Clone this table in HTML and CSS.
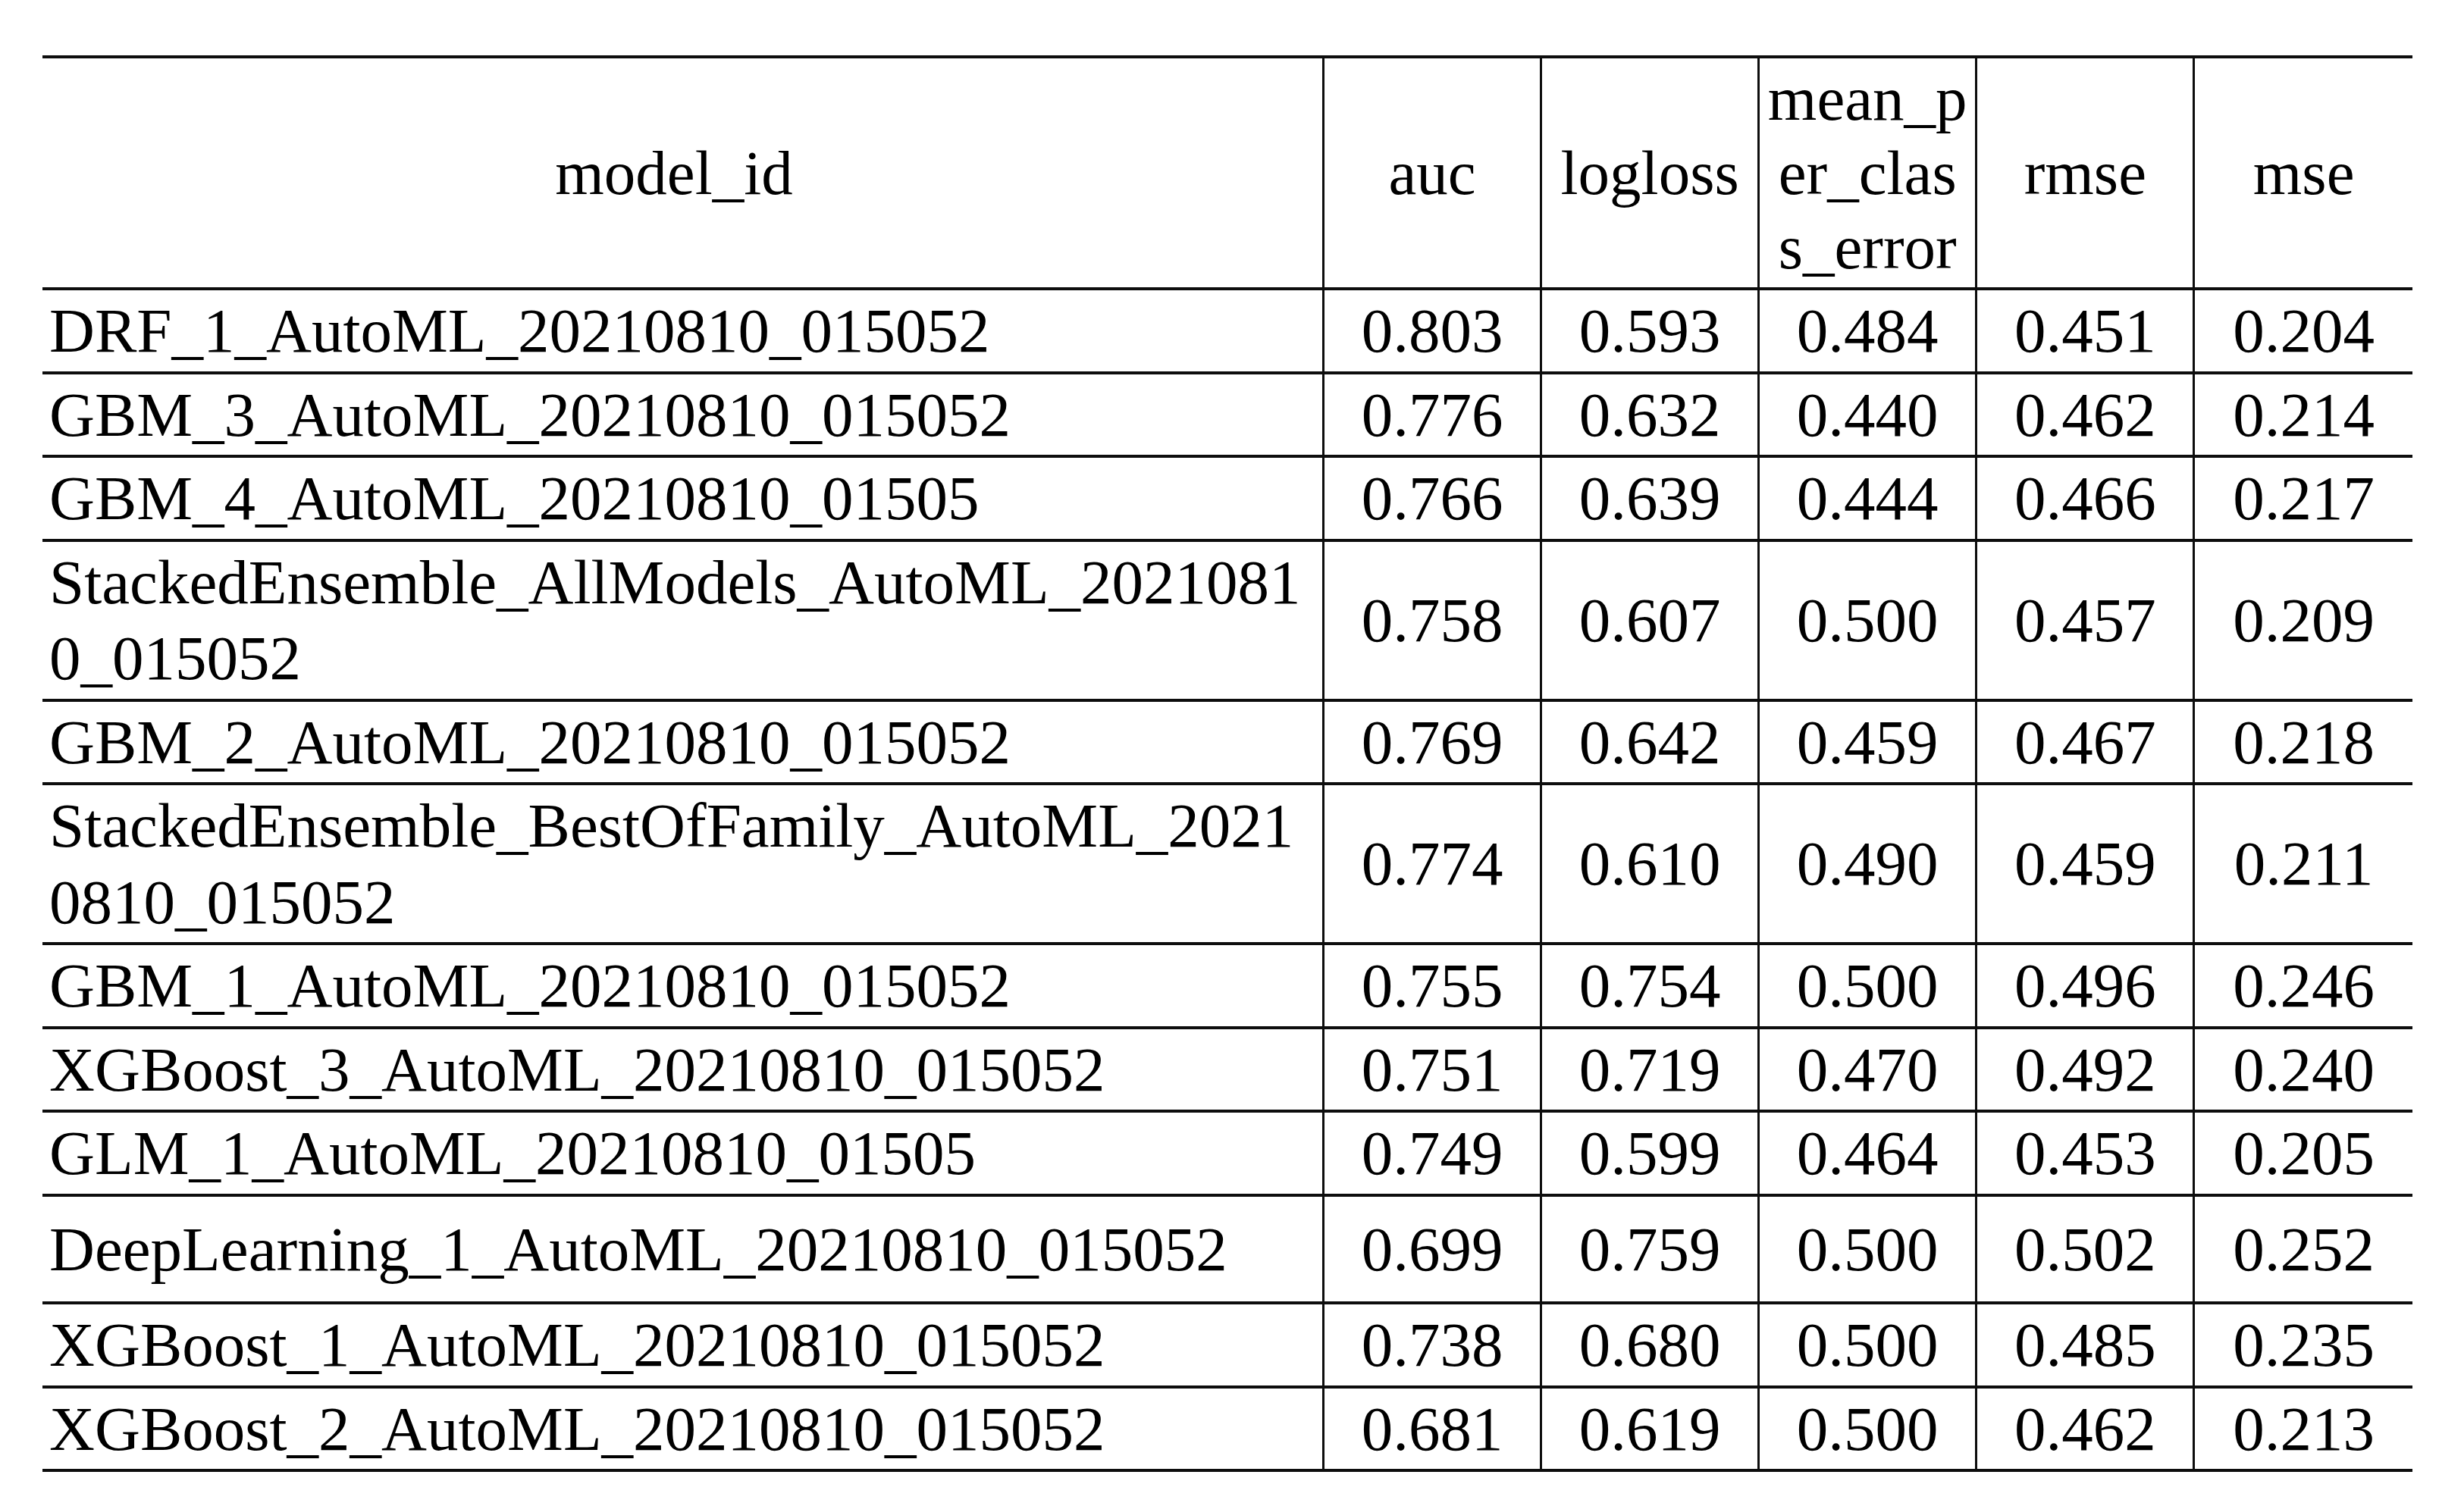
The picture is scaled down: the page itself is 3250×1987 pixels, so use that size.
FILE: index.html
```html
<!DOCTYPE html>
<html lang="en">
<head>
<meta charset="utf-8">
<title>AutoML leaderboard</title>
<link rel="stylesheet" href="styles.css">
</head>
<body>
<div class="page">
<table class="board">
  <colgroup>
    <col class="c-id"><col class="c-num"><col class="c-num"><col class="c-num"><col class="c-num"><col class="c-last">
  </colgroup>
  <thead>
    <tr>
      <th class="id-head">model_id</th>
      <th>auc</th>
      <th>logloss</th>
      <th>mean_p<br>er_clas<br>s_error</th>
      <th>rmse</th>
      <th>mse</th>
    </tr>
  </thead>
  <tbody>
    <tr><td class="id">DRF_1_AutoML_20210810_015052</td><td>0.803</td><td>0.593</td><td>0.484</td><td>0.451</td><td>0.204</td></tr>
    <tr><td class="id">GBM_3_AutoML_20210810_015052</td><td>0.776</td><td>0.632</td><td>0.440</td><td>0.462</td><td>0.214</td></tr>
    <tr><td class="id">GBM_4_AutoML_20210810_01505</td><td>0.766</td><td>0.639</td><td>0.444</td><td>0.466</td><td>0.217</td></tr>
    <tr><td class="id">StackedEnsemble_AllModels_AutoML_20210810_015052</td><td>0.758</td><td>0.607</td><td>0.500</td><td>0.457</td><td>0.209</td></tr>
    <tr><td class="id">GBM_2_AutoML_20210810_015052</td><td>0.769</td><td>0.642</td><td>0.459</td><td>0.467</td><td>0.218</td></tr>
    <tr><td class="id">StackedEnsemble_BestOfFamily_AutoML_20210810_015052</td><td>0.774</td><td>0.610</td><td>0.490</td><td>0.459</td><td>0.211</td></tr>
    <tr><td class="id">GBM_1_AutoML_20210810_015052</td><td>0.755</td><td>0.754</td><td>0.500</td><td>0.496</td><td>0.246</td></tr>
    <tr><td class="id">XGBoost_3_AutoML_20210810_015052</td><td>0.751</td><td>0.719</td><td>0.470</td><td>0.492</td><td>0.240</td></tr>
    <tr><td class="id">GLM_1_AutoML_20210810_01505</td><td>0.749</td><td>0.599</td><td>0.464</td><td>0.453</td><td>0.205</td></tr>
    <tr class="tall"><td class="id">DeepLearning_1_AutoML_20210810_015052</td><td>0.699</td><td>0.759</td><td>0.500</td><td>0.502</td><td>0.252</td></tr>
    <tr><td class="id">XGBoost_1_AutoML_20210810_015052</td><td>0.738</td><td>0.680</td><td>0.500</td><td>0.485</td><td>0.235</td></tr>
    <tr><td class="id">XGBoost_2_AutoML_20210810_015052</td><td>0.681</td><td>0.619</td><td>0.500</td><td>0.462</td><td>0.213</td></tr>
  </tbody>
</table>
</div>
</body>
</html>
```

FILE: styles.css
```css
html, body {
  margin: 0;
  padding: 0;
  background: #ffffff;
}

.page {
  padding: 73px 0 0 56px;
}

.board {
  border-collapse: collapse;
  table-layout: fixed;
  width: 3126px;
  font-family: "Liberation Serif", "Times New Roman", serif;
  font-size: 83px;
  color: #000000;
}

.c-id { width: 1689px; }
.c-num { width: 287px; }
.c-last { width: 288px; }

.board tr {
  border-top: 4px solid #0d0d0d;
  border-bottom: 4px solid #0d0d0d;
}

.board th,
.board td {
  border-left: 3px solid #0d0d0d;
  border-right: 3px solid #0d0d0d;
  text-align: center;
  vertical-align: middle;
  font-weight: normal;
  padding: 3px 6px;
  line-height: 100.5px;
  white-space: normal;
}

.board th {
  line-height: 98px;
  padding: 4px 4px;
}

.board th.id-head {
  padding-right: 26px;
}

.board th:first-child,
.board td:first-child {
  border-left: none;
}

.board th:last-child,
.board td:last-child {
  border-right: none;
}

.board td.id {
  text-align: left;
  padding-left: 9px;
  padding-right: 9px;
  word-break: break-all;
}

.board tr.tall td {
  padding-top: 19px;
  padding-bottom: 19px;
}
```
